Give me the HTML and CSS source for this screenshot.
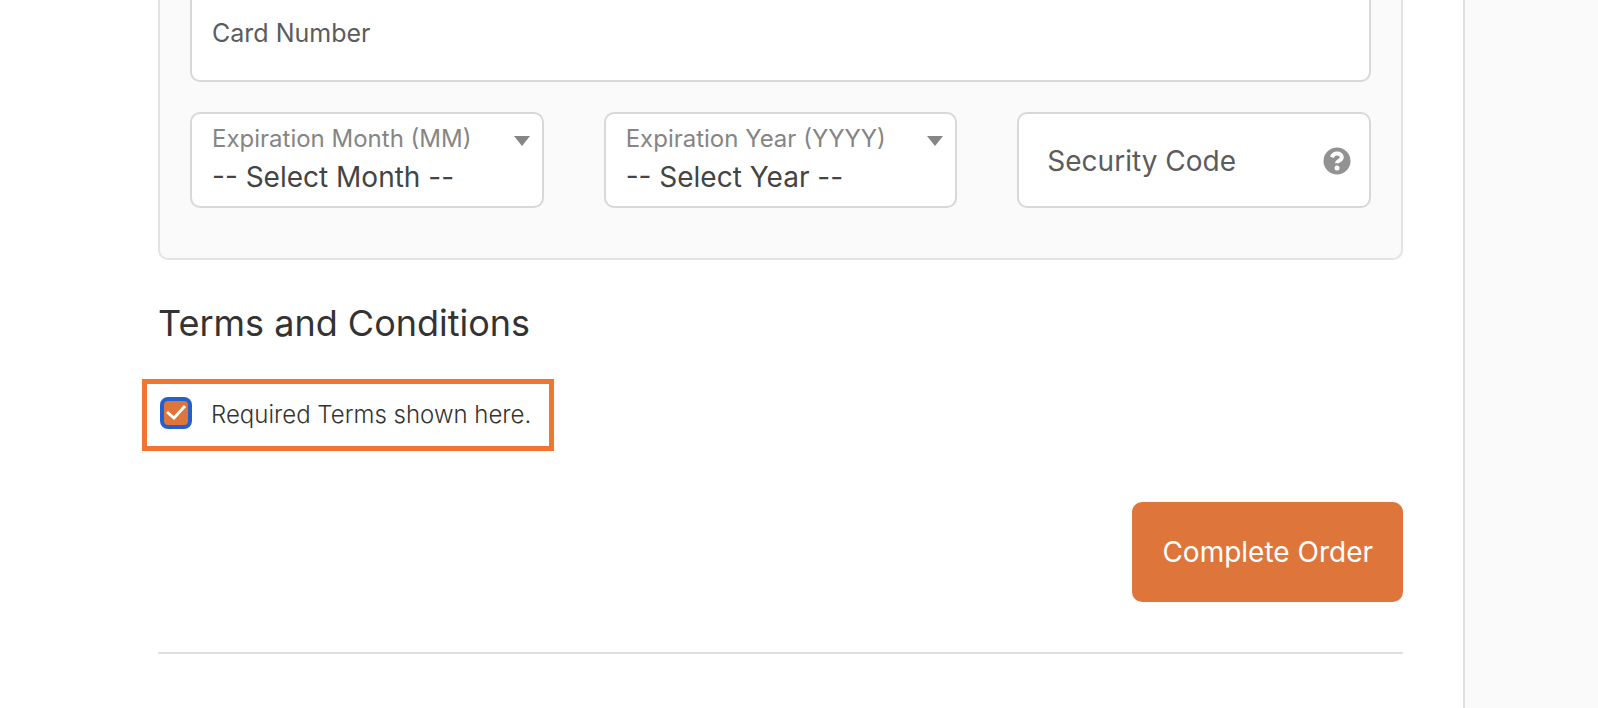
FILE: index.html
```html
<!DOCTYPE html>
<html lang="en">
<head>
    <meta charset="UTF-8">
    <meta name="viewport" content="width=device-width, initial-scale=1.0">
    <title>Checkout</title>
    <link rel="stylesheet" href="styles.css">
</head>
<body>

    <div class="page">
        <main class="checkout">
            <form>
                <div class="payment">
                    <input class="card-number" type="text" id="cardNumber" placeholder="Card Number" aria-label="Card Number">

                    <div class="card-row">
                        <div class="field select-field">
                            <label for="expMonth">Expiration Month (MM)</label>
                            <select id="expMonth">
                                <option>-- Select Month --</option>
                            </select>
                            <svg class="arrow" viewBox="0 0 16 10" aria-hidden="true"><path d="M0 0h16L8 10z"/></svg>
                        </div>
                        <div class="field select-field">
                            <label for="expYear">Expiration Year (YYYY)</label>
                            <select id="expYear">
                                <option>-- Select Year --</option>
                            </select>
                            <svg class="arrow" viewBox="0 0 16 10" aria-hidden="true"><path d="M0 0h16L8 10z"/></svg>
                        </div>
                        <div class="field code-field">
                            <input type="text" id="securityCode" placeholder="Security Code" aria-label="Security Code">
                            <button type="button" class="help" aria-label="Help">
                                <svg viewBox="0 0 28 28" aria-hidden="true">
                                    <circle cx="14" cy="14" r="13.5" fill="#929292"/>
                                    <path d="M8.8 10.2C9.9 7.7 11.6 6.6 14 6.6c2.800 0 4.800 1.500 4.800 3.700 0 3.300-4.800 3.300-4.800 5.900" fill="none" stroke="#fff" stroke-width="4"/>
                                    <circle cx="14" cy="21" r="2.5" fill="#fff"/>
                                </svg>
                            </button>
                        </div>
                    </div>
                </div>

                <h2>Terms and Conditions</h2>
                <div class="terms">
                    <input type="checkbox" id="terms" checked>
                    <label for="terms">Required Terms shown here.</label>
                </div>

                <div class="actions">
                    <button type="submit" class="submit">Complete Order</button>
                </div>
            </form>
            <hr>
        </main>
        <aside class="summary"></aside>
    </div>

</body>
</html>
```
FILE: styles.css
```css
*{
    box-sizing: border-box;
}

body{
    margin: 0;
    background: #fff;
    color: #333;
    font-family: Inter, "Liberation Sans", sans-serif;
}

input, select, button{
    font: inherit;
    color: inherit;
}

.page{
    display: flex;
    min-height: 100vh;
}

.checkout{
    flex: 1;
    padding: 0 60px 52px 158px;
}

.summary{
    width: 135px;
    border-left: 2px solid #dfdfdf;
    background: #fafafa;
}

/* Payment panel */
.payment{
    padding: 0 30px 50px;
    border: 2px solid #e3e3e3;
    border-top: 0;
    border-radius: 0 0 10px 10px;
    background: #fafafa;
}

.card-number{
    display: block;
    width: 100%;
    height: 82px;
    padding: 0 20px 16px;
    border: 2px solid #d8d8d8;
    border-top: 0;
    border-radius: 0 0 10px 10px;
    background: #fff;
    font-size: 26px;
}

.card-row{
    display: grid;
    grid-template-columns: repeat(3, minmax(0, 1fr));
    gap: 60px;
    margin-top: 30px;
}

.field{
    position: relative;
    height: 96px;
    border: 2px solid #d8d8d8;
    border-radius: 10px;
    background: #fff;
}

.select-field{
    padding: 9px 20px;
}

.select-field label{
    display: block;
    color: #858585;
    font-size: 24px;
    line-height: 32px;
    white-space: nowrap;
}

.select-field select{
    display: block;
    width: 100%;
    height: 44px;
    padding: 0;
    border: 0;
    background: none;
    color: #444;
    font-size: 28px;
    appearance: none;
}

.arrow{
    position: absolute;
    top: 22px;
    right: 12px;
    width: 16px;
    height: 10px;
    fill: #858585;
}

.code-field{
    display: flex;
    align-items: center;
    padding: 2px 18px 0 28px;
}

.code-field input{
    flex: 1;
    min-width: 0;
    padding: 0;
    border: 0;
    background: none;
    font-size: 28px;
}

::placeholder{
    color: #5c5c5c;
    opacity: 1;
}

.card-number::placeholder{
    font-size: 25px;
}

.help{
    width: 28px;
    height: 28px;
    padding: 0;
    border: 0;
    background: none;
}

.help svg{
    display: block;
}

/* Terms */
h2{
    margin: 40px 0 32px;
    font-size: 36px;
    font-weight: 400;
    line-height: 47px;
}

.terms{
    display: flex;
    align-items: flex-start;
    gap: 19px;
    width: fit-content;
    height: 72px;
    margin-left: -16px;
    padding: 13px 18px 0 13px;
    border: 5px solid #f0762f;
    font-size: 24px;
    font-weight: 300;
    line-height: 36px;
}

.terms input{
    width: 32px;
    height: 32px;
    margin: 0;
    border: 4px solid #265ecb;
    border-radius: 8px;
    background: #de763b url("data:image/svg+xml,%3Csvg xmlns='http://www.w3.org/2000/svg' viewBox='0 0 24 24'%3E%3Cpath d='M3 11l7 6L21 5' fill='none' stroke='white' stroke-width='2.800'/%3E%3C/svg%3E") center / 100% no-repeat;
    appearance: none;
}

.actions{
    display: flex;
    justify-content: flex-end;
    margin-top: 51px;
}

.submit{
    height: 100px;
    padding: 0 30px;
    border: 0;
    border-radius: 10px;
    background: #de763b;
    color: #fff;
    font-size: 28px;
    font-weight: 400;
}

hr{
    margin: 50px 0 0;
    border: 0;
    border-top: 2px solid #dfdfdf;
}
```
